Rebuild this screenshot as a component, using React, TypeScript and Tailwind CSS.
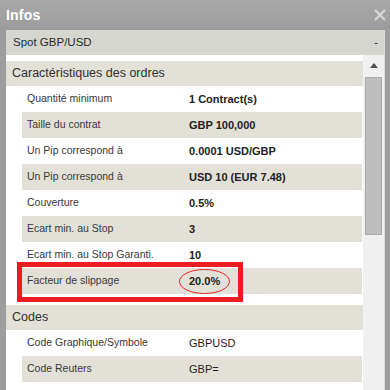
const ordres: [string, string][] = [
  ["Quantité minimum", "1 Contract(s)"],
  ["Taille du contrat", "GBP 100,000"],
  ["Un Pip correspond à", "0.0001 USD/GBP"],
  ["Un Pip correspond à", "USD 10 (EUR 7.48)"],
  ["Couverture", "0.5%"],
  ["Ecart min. au Stop", "3"],
  ["Ecart min. au Stop Garanti.", "10"],
  ["Facteur de slippage", "20.0%"],
];

const codes: [string, string][] = [
  ["Code Graphique/Symbole", "GBPUSD"],
  ["Code Reuters", "GBP="],
  ["", ""],
];

const Row = ({ label, value, odd, bold }: { label: string; value: string; odd: boolean; bold?: boolean }) => (
  <div className={`shrink-0 ml-[16px] mr-[1px] h-[26px] flex items-center ${odd ? "bg-[#e3e0d8]" : "bg-white"}`}>
    <div className="w-[167px] pl-[5px] text-[10.5px] text-[#383838]">{label}</div>
    <div className={bold ? "text-[11px] font-bold text-[#222]" : "text-[11px] text-[#222]"}>{value}</div>
  </div>
);

const SectionHeader = ({ title }: { title: string }) => (
  <div className="shrink-0 h-[25px] flex items-center pl-[6px] bg-[#e3e0d8] text-[12.5px] text-[#303030]">{title}</div>
);

export default function App() {
  return (
    <div
      className="relative w-[390px] h-[390px] overflow-hidden bg-[#9d9d9d] flex flex-col"
      style={{ fontFamily: '"Liberation Sans", Arial, sans-serif' }}
    >
      {/* title bar */}
      <div className="h-[30px] shrink-0 flex items-center justify-between pl-[6px] pr-[3px] bg-gradient-to-b from-[#a8a8a8] to-[#9c9c9c]">
        <span className="text-white font-bold text-[14px] tracking-[0.2px]">Infos</span>
        <svg width="12" height="12" viewBox="0 0 12 12" className="mr-[1px] -mt-[1px]">
          <path d="M1 1 L11 11 M11 1 L1 11" stroke="#d9d9d9" strokeWidth="2" />
        </svg>
      </div>

      <div className="flex-1 ml-[6px] mr-[5px] bg-white border-r border-[#dcdcdc] flex flex-col min-h-0 overflow-hidden">
        <div className="h-[25px] shrink-0 flex items-center justify-between pl-[7px] pr-[6px] bg-[#d6d6d0] text-[11.5px] text-[#2a2a2a]">
          <span>Spot GBP/USD</span>
          <span className="text-[11px]">-</span>
        </div>
        <div className="flex flex-1 min-h-0">
          <div className="flex-1 flex flex-col">
            <div className="h-[6px] shrink-0" />
            <SectionHeader title="Caractéristiques des ordres" />
            {ordres.map(([l, v], i) => (
              <Row key={i} label={l} value={v} odd={i % 2 === 1} bold />
            ))}
            <div className="h-[11px] shrink-0" />
            <SectionHeader title="Codes" />
            {codes.map(([l, v], i) => (
              <Row key={i} label={l} value={v} odd={i % 2 === 1} />
            ))}
          </div>
          {/* scrollbar */}
          <div className="w-[21px] shrink-0 bg-[#f0f0f0] flex flex-col items-center">
            <div className="h-[21px] shrink-0 flex items-center justify-center">
              <svg width="8" height="5" viewBox="0 0 8 5">
                <path d="M0 5 L4 0 L8 5 Z" fill="#505050" />
              </svg>
            </div>
            <div className="shrink-0 mt-[1px] w-[17px] h-[158px] bg-[#bebebe] border border-[#a9a9a9]" />
          </div>
        </div>
      </div>

      {/* annotations */}
      <div className="absolute left-[17px] top-[262px] w-[226px] h-[40px] border-[5px] border-[#ec1c24]" />
      <svg className="absolute left-[178px] top-[268px]" width="53" height="27" viewBox="0 0 53 27">
        <ellipse cx="26.5" cy="13.5" rx="25" ry="12" fill="none" stroke="#e0202a" strokeWidth="1" />
      </svg>
    </div>
  );
}
